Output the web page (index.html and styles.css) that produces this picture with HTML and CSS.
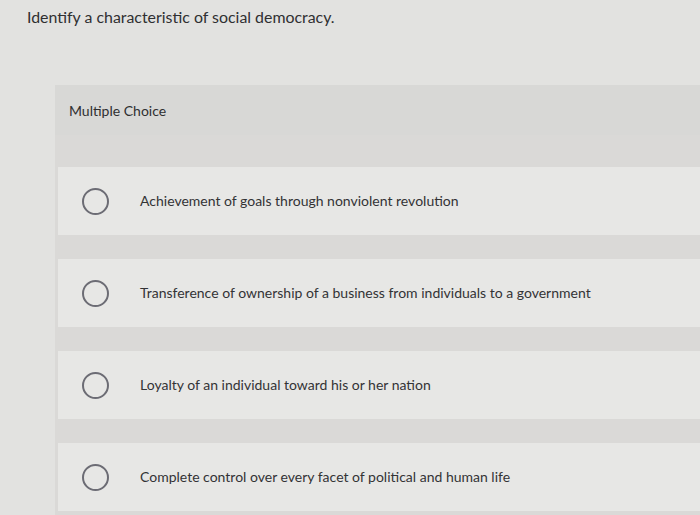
FILE: index.html
```html
<!DOCTYPE html>
<html>
<head>
<meta charset="utf-8">
<link rel="stylesheet" href="styles.css">
</head>
<body>
<div class="page">
  <h1 class="question">Identify a characteristic of social democracy.</h1>
  <div class="panel">
    <div class="panel-head">Multiple Choice</div>
    <div class="options">
      <div class="option"><span class="radio"></span><span class="label">Achievement of goals through nonviolent revolution</span></div>
      <div class="option"><span class="radio"></span><span class="label">Transference of ownership of a business from individuals to a government</span></div>
      <div class="option"><span class="radio"></span><span class="label">Loyalty of an individual toward his or her nation</span></div>
      <div class="option"><span class="radio"></span><span class="label">Complete control over every facet of political and human life</span></div>
    </div>
  </div>
</div>
</body>
</html>
```

FILE: styles.css
```css
html, body {
  margin: 0;
  padding: 0;
}
body {
  background: #e2e2e0;
  font-family: Lato, "Liberation Sans", sans-serif;
  color: #363638;
  width: 700px;
  height: 515px;
  overflow: hidden;
}
.page {
  display: flex;
  flex-direction: column;
}
.question {
  margin: 0;
  padding: 6px 0 0 27px;
  height: 85px;
  box-sizing: border-box;
  font-size: 15.9px;
  font-weight: 400;
  line-height: 22px;
  color: #2f2f31;
}
.panel {
  margin-left: 55px;
  display: flex;
  flex-direction: column;
}
.panel-head {
  height: 50px;
  box-sizing: border-box;
  padding: 17px 0 0 14px;
  font-size: 14px;
  line-height: 18px;
  background: #d8d8d6;
  color: #2f2f31;
}
.options {
  background: #dad9d7;
  padding: 32px 0 20px 3px;
  display: flex;
  flex-direction: column;
  gap: 24px;
}
.option {
  height: 68px;
  background: #e7e7e5;
  display: flex;
  align-items: center;
  padding-left: 24px;
}
.radio {
  width: 23px;
  height: 23px;
  border: 2px solid #6c6c74;
  border-radius: 50%;
  flex: none;
}
.label {
  margin-left: 31px;
  font-size: 14px;
  line-height: 18px;
  color: #333335;
}
```
